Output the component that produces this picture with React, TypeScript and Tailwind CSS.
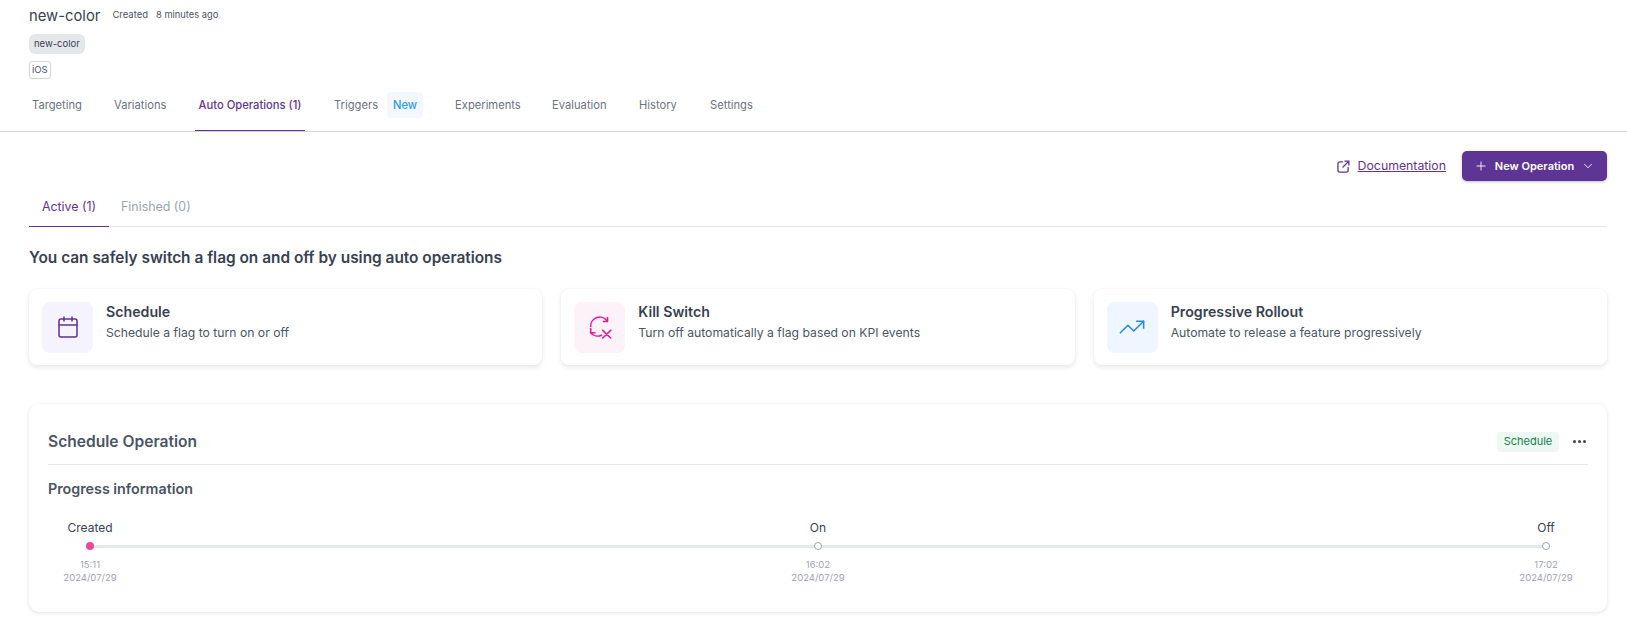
import { Calendar, ChevronDown, Plus, TrendingUp } from "lucide-react";

const mainTabs = [
  { label: "Targeting", cls: "w-[82px] pl-[3px]" },
  { label: "Variations", cls: "w-[84px] pl-[3px]" },
];

const rightTabs = [
  { label: "Experiments", cls: "w-[97px]" },
  { label: "Evaluation", cls: "w-[87px]" },
  { label: "History", cls: "w-[71px]" },
  { label: "Settings", cls: "" },
];

const steps = [
  { label: "Created", time: "15:11", active: true },
  { label: "On", time: "16:02", active: false },
  { label: "Off", time: "17:02", active: false },
];

function KillSwitchIcon() {
  return (
    <svg width="24" height="24" viewBox="0 0 24 24" fill="none" stroke="#e6199b" strokeWidth="1.6" strokeLinecap="round" strokeLinejoin="round">
      <path d="M2.700 11.500A9 9 0 0 1 19.300 6.300" />
      <path d="M19.500 2.500v4h-4" />
      <path d="M2.700 17.700A9 9 0 0 0 13.500 20.200" />
      <path d="M2.700 13.500v4.200h4.300" />
      <path d="m14.700 15.300 8 7.700M22.700 15.300l-8 7.700" />
    </svg>
  );
}

function ExternalIcon() {
  return (
    <svg width="13" height="13" viewBox="0 0 14 14" fill="none" stroke="#5e3594" strokeWidth="1.400" strokeLinecap="round" strokeLinejoin="round">
      <path d="M6 2H3a2 2 0 0 0-2 2v7a2 2 0 0 0 2 2h7a2 2 0 0 0 2-2V8" />
      <path d="M6.500 7.500 12.500 1.500M8.500 1.200h4.300v4.300" />
    </svg>
  );
}

function InfoCard({ icon, bg, title, text }: { icon: React.ReactNode; bg: string; title: string; text: string }) {
  return (
    <div className="flex h-[76px] flex-1 items-center gap-[13px] rounded-lg bg-white pl-[13px] shadow-[0_2px_5px_rgba(0,0,0,0.1),0_0_2px_rgba(0,0,0,0.04)]">
      <div className={`flex h-[51px] w-[51px] items-center justify-center rounded-lg ${bg}`}>{icon}</div>
      <div className="mb-[10px]">
        <div className="text-[14.200px] leading-[20px] font-semibold text-[#374151]">{title}</div>
        <div className="mt-[1px] text-[12.200px] leading-[20px] text-[#4b5563]">{text}</div>
      </div>
    </div>
  );
}

export default function App() {
  return (
    <div className="h-[627px] overflow-hidden bg-white font-['Inter',sans-serif]">
      {/* Flag header */}
      <div className="px-[29px] pt-[5px]">
        <div className="flex h-[22px] items-center">
          <h1 className="text-[14.800px] leading-[22px] text-[#374151]">new-color</h1>
          <span className="mb-[2px] ml-[12px] text-[9.500px] text-[#4b5563]">Created</span>
          <span className="mb-[2px] ml-[8px] text-[9.300px] text-[#4b5563]">8 minutes ago</span>
        </div>
        <div className="mt-[7px] flex">
          <span className="flex h-[20px] items-center rounded-md bg-[#e5e7eb] px-[5px] text-[9.500px] text-[#374151]">new-color</span>
        </div>
        <div className="mt-[7px] flex">
          <span className="flex h-[18px] items-center rounded-[3px] border border-[#d1d5db] px-[2px] text-[9.500px] text-[#4b5563]">iOS</span>
        </div>
      </div>

      {/* Main tabs */}
      <div className="mt-[13px] flex h-[40px] items-start border-b border-[#d1d5db] px-[29px] text-[11.200px] text-[#6b7280]">
        {mainTabs.map((t) => (
          <div key={t.label} className={`flex h-[26px] items-center ${t.cls}`}>{t.label}</div>
        ))}
        <div className="flex h-[39px] w-[110px] items-start justify-center border-b border-[#5e3594] font-medium text-[#5e3594]">
          <span className="flex h-[26px] items-center">Auto Operations (1)</span>
        </div>
        <div className="ml-[29px] flex h-[26px] items-center">
          <span>Triggers</span>
          <span className="ml-[9px] flex h-[26px] w-[36px] items-center justify-center rounded-sm bg-[#f3f8fe] font-medium text-[#2e9bf0]">New</span>
        </div>
        <div className="ml-[32px] flex h-[26px] items-center">
          {rightTabs.map((t) => (
            <div key={t.label} className={t.cls}>{t.label}</div>
          ))}
        </div>
      </div>

      <div className="px-[20px] pl-[29px]">
        {/* Actions */}
        <div className="mt-[19px] flex h-[30px] items-center justify-end">
          <ExternalIcon />
          <a className="mr-[16px] ml-[8px] text-[12.300px] text-[#5e3594] underline">Documentation</a>
          <button className="flex h-[30px] w-[145px] items-center justify-center gap-[7px] rounded-[5px] bg-[#5e3594] text-[11px] font-semibold text-white shadow-[0_1px_3px_rgba(0,0,0,0.25)]">
            <Plus size={14} strokeWidth={1.500} />
            New Operation
            <ChevronDown size={14} strokeWidth={1.500} />
          </button>
        </div>

        {/* Sub tabs */}
        <div className="flex h-[46px] items-stretch border-b border-[#e5e7eb] text-[12.400px]">
          <div className="flex w-[80px] translate-y-px items-center justify-center border-b border-[#5e3594] pt-[6px] text-[#5e3594]">Active (1)</div>
          <div className="flex items-center pt-[8px] pl-[12px] text-[#9ca3af]">Finished (0)</div>
        </div>

        <h2 className="mt-[21px] text-[15.400px] leading-[20px] font-semibold text-[#374151]">You can safely switch a flag on and off by using auto operations</h2>

        {/* Operation kinds */}
        <div className="mt-[21px] flex gap-[19px]">
          <InfoCard icon={<Calendar size={24} strokeWidth={1.500} className="text-[#5e3594]" />} bg="bg-[#f5f3ff]" title="Schedule" text="Schedule a flag to turn on or off" />
          <InfoCard icon={<KillSwitchIcon />} bg="bg-[#fdf2f8]" title="Kill Switch" text="Turn off automatically a flag based on KPI events" />
          <InfoCard icon={<TrendingUp size={28} strokeWidth={1.300} className="text-[#2388e6]" />} bg="bg-[#eff6ff]" title="Progressive Rollout" text="Automate to release a feature progressively" />
        </div>

        {/* Schedule operation */}
        <div className="mt-[39px] h-[208px] rounded-[10px] bg-white px-[19px] shadow-[0_1px_4px_rgba(0,0,0,0.12)]">
          <div className="flex h-[61px] items-center justify-between border-b border-[#e5e7eb] pt-[15px]">
            <h3 className="text-[15.600px] font-semibold text-[#4b5563]">Schedule Operation</h3>
            <div className="flex items-center">
              <span className="flex h-[20px] w-[62px] items-center justify-center rounded-[3px] bg-[#ecf8f1] text-[11px] text-[#16804f]">Schedule</span>
              <div className="mr-[2px] ml-[14px] flex w-[13px] justify-between">
                <span className="h-[3px] w-[3px] rounded-full bg-[#374151]" />
                <span className="h-[3px] w-[3px] rounded-full bg-[#374151]" />
                <span className="h-[3px] w-[3px] rounded-full bg-[#374151]" />
              </div>
            </div>
          </div>
          <h4 className="mt-[14px] text-[14.300px] leading-[20px] font-semibold text-[#4b5563]">Progress information</h4>
          <div className="relative mt-[19px] flex justify-between px-[14px]">
            <div className="absolute top-[27px] right-[43px] left-[42px] h-[3px] bg-[#e5e7eb]" />
            {steps.map((s) => (
              <div key={s.label} className="relative flex w-[56px] flex-col items-center">
                <span className="h-[20px] text-[12px] leading-[20px] text-[#374151]">{s.label}</span>
                <span className={`mt-[4px] h-[8px] w-[8px] rounded-full ${s.active ? "bg-[#ec4899]" : "border border-[#9ca3af] bg-white"}`} />
                <span className="mt-[8px] text-[9.500px] leading-[13px] text-[#9ca3af]">{s.time}</span>
                <span className="text-[9.500px] leading-[13px] whitespace-nowrap text-[#9ca3af]">2024/07/29</span>
              </div>
            ))}
          </div>
        </div>
      </div>
    </div>
  );
}
